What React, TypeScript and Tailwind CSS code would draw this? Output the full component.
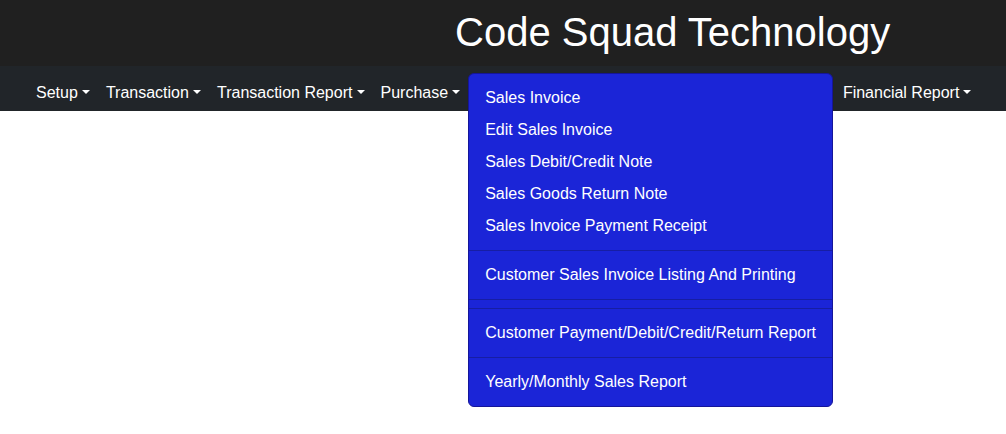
const menus = [
  "Setup",
  "Transaction",
  "Transaction Report",
  "Purchase",
  "Sales",
  "Sales Report",
  "Inventory",
  "Reports",
  "Financial Report",
];

// these sit under the open Sales dropdown
const covered = ["Sales", "Sales Report", "Inventory", "Reports"];

type Entry = { label?: string; divider?: boolean };

const salesItems: Entry[] = [
  { label: "Sales Invoice" },
  { label: "Edit Sales Invoice" },
  { label: "Sales Debit/Credit Note" },
  { label: "Sales Goods Return Note" },
  { label: "Sales Invoice Payment Receipt" },
  { divider: true },
  { label: "Customer Sales Invoice Listing And Printing" },
  { divider: true },
  { divider: true },
  { label: "Customer Payment/Debit/Credit/Return Report" },
  { divider: true },
  { label: "Yearly/Monthly Sales Report" },
];

function Caret() {
  return (
    <span className="inline-block ml-[0.255em] align-[0.255em] border-t-[0.3em] border-x-[0.3em] border-b-0 border-t-white border-x-transparent" />
  );
}

function SalesMenu() {
  return (
    <div className="visible absolute left-0 top-0 z-10 py-2 bg-[#1b25d7] border border-[#15159a] rounded-[6px] whitespace-nowrap">
      {salesItems.map((item, i) =>
        item.divider ? (
          <div key={i} className="my-2 border-t border-[#171ea3]" />
        ) : (
          <div key={i} className="px-4 py-1 leading-6 text-white">
            {item.label}
          </div>
        )
      )}
    </div>
  );
}

export default function App() {
  return (
    <div className="min-h-screen bg-white text-[16px] font-['Liberation_Sans',Arial,sans-serif]">
      <div className="h-[66px] pt-2 bg-[#202020] grid grid-cols-3">
        <div />
        <h1 className="col-span-2 text-center text-white text-[40px] leading-[48px] pl-1">
          Code Squad Technology
        </h1>
      </div>
      <nav className="h-[45px] bg-[#212529]">
        <ul className="flex pl-[28px] pt-[7px]">
          {menus.map((m) => (
            <li key={m} className="relative">
              <span
                className={
                  covered.includes(m)
                    ? "invisible block px-2 py-2 leading-6 text-white whitespace-nowrap"
                    : "block px-2 py-2 leading-6 text-white whitespace-nowrap"
                }
              >
                {m}
                <Caret />
              </span>
              {m === "Sales" && <SalesMenu />}
            </li>
          ))}
        </ul>
      </nav>
    </div>
  );
}
